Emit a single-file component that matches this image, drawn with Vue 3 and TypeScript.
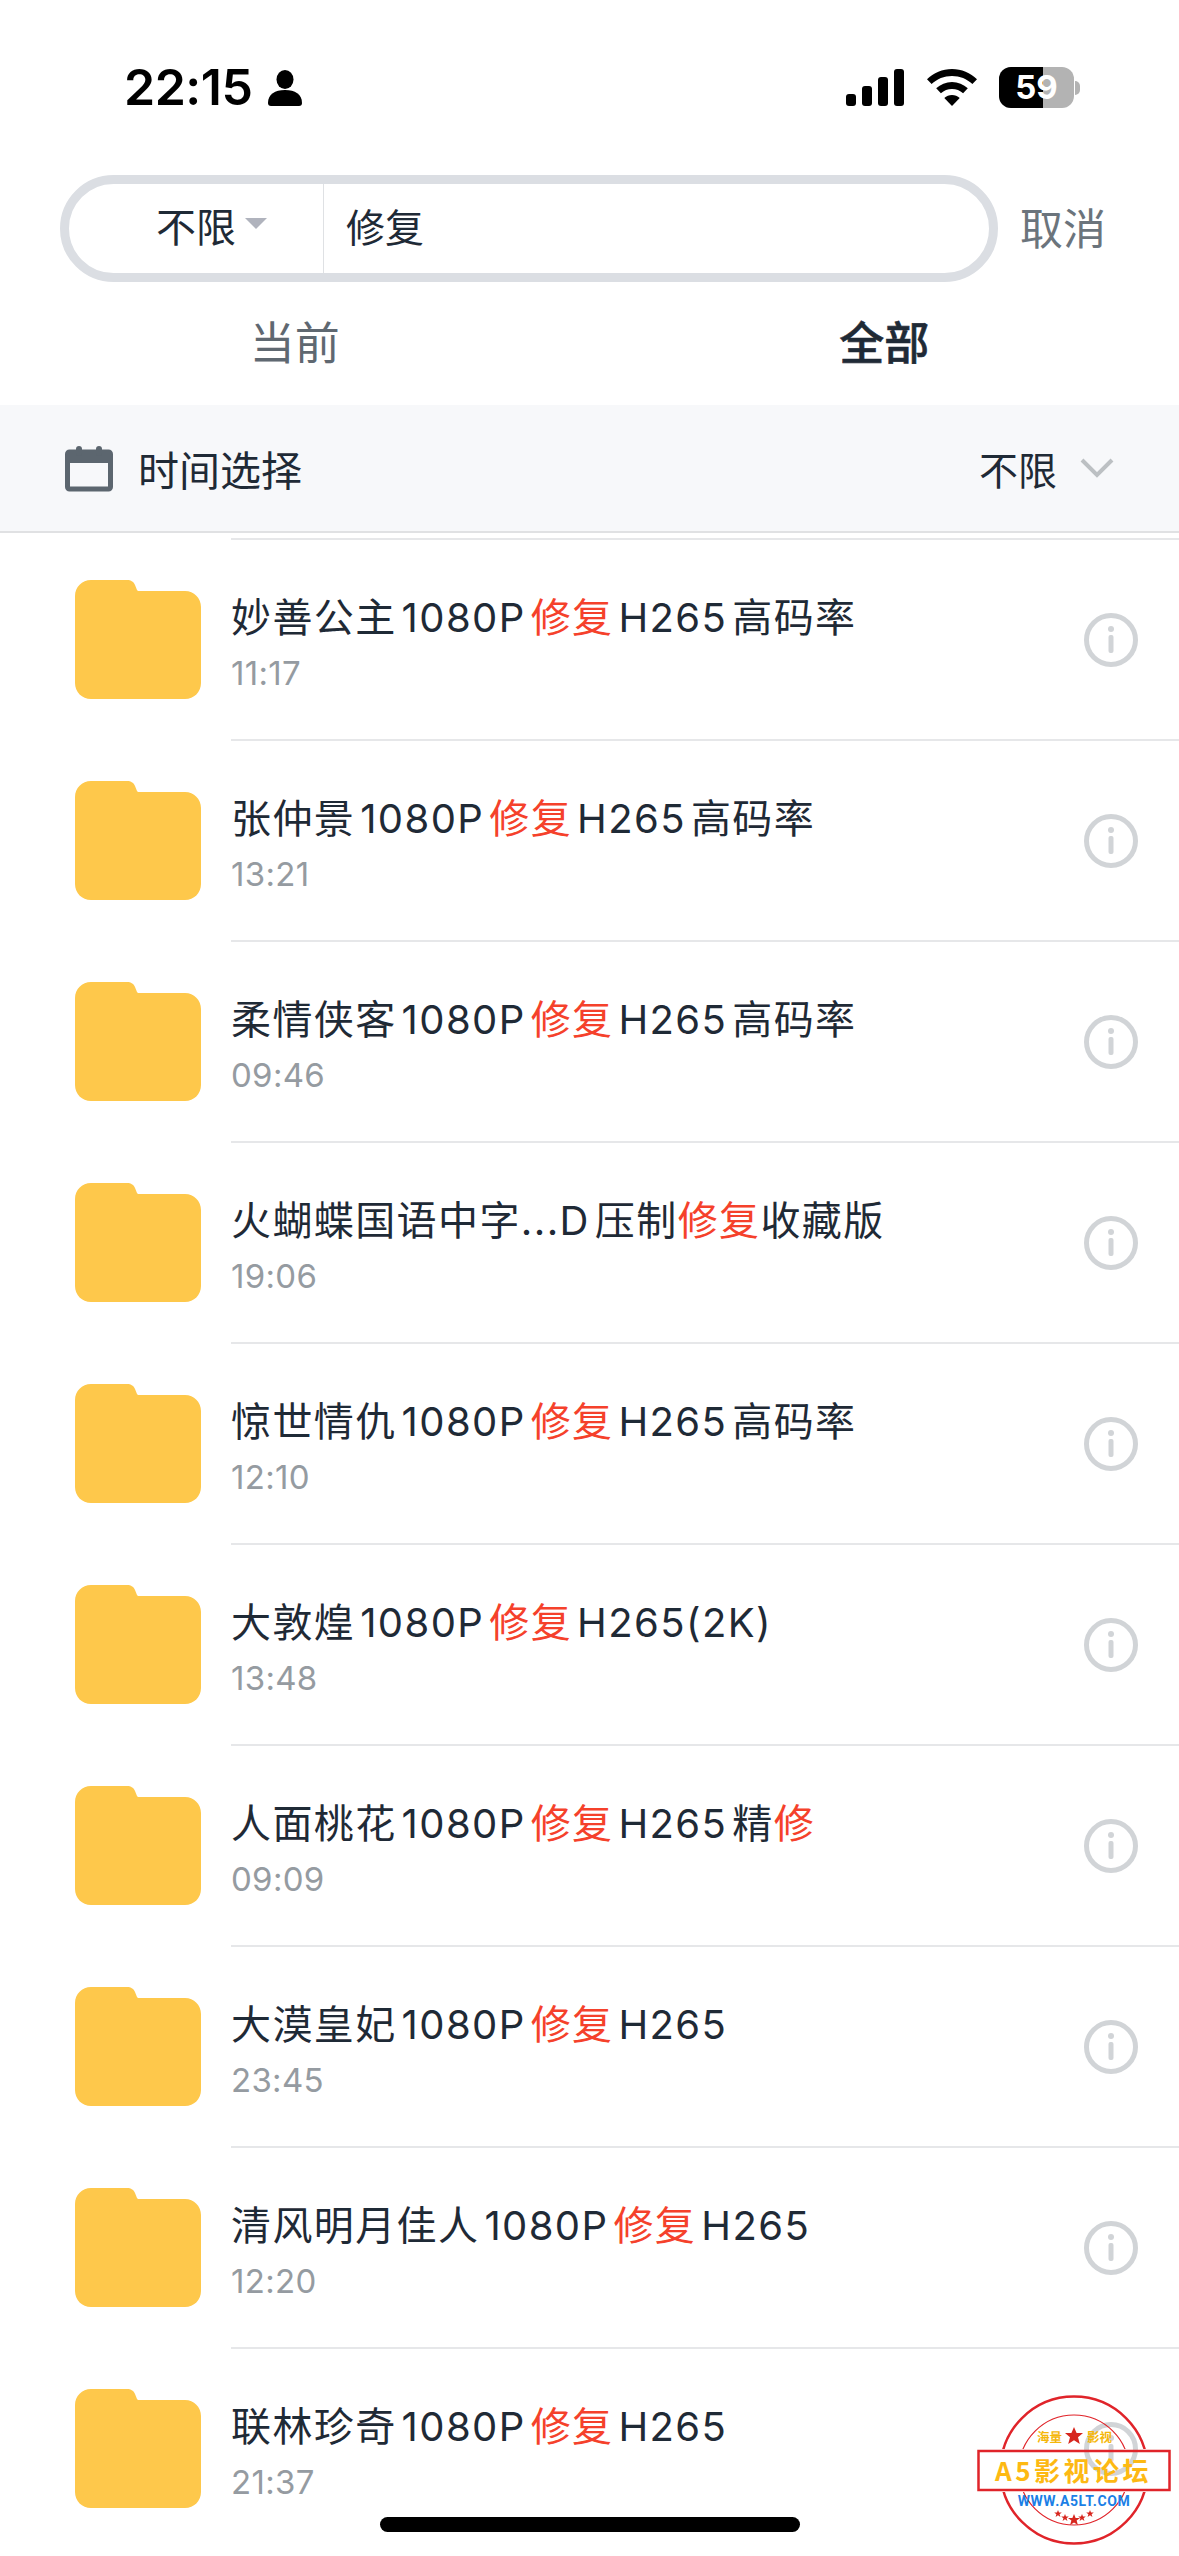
<script setup lang="ts">
interface Row {
  parts: { text: string; hit?: boolean }[]
  time: string
}
const r = (pre: string, post: string, time: string, extra?: string): Row => ({
  parts: [
    { text: pre },
    { text: '修复', hit: true },
    { text: post },
    ...(extra ? [{ text: extra, hit: true }] : []),
  ],
  time,
})
const rows: Row[] = [
  r('妙善公主1080P', 'H265高码率', '11:17'),
  r('张仲景1080P', 'H265高码率', '13:21'),
  r('柔情侠客1080P', 'H265高码率', '09:46'),
  r('火蝴蝶国语中字...D压制', '收藏版', '19:06'),
  r('惊世情仇1080P', 'H265高码率', '12:10'),
  r('大敦煌1080P', 'H265(2K)', '13:48'),
  r('人面桃花1080P', 'H265精', '09:09', '修'),
  r('大漠皇妃1080P', 'H265', '23:45'),
  r('清风明月佳人1080P', 'H265', '12:20'),
  r('联林珍奇1080P', 'H265', '21:37'),
]
</script>

<template>
  <div class="page">
    <header class="status">
      <div class="status-left">
        <span class="clock">22:15</span>
        <svg class="person" viewBox="0 0 34 36" width="34" height="36">
          <ellipse cx="17" cy="9.500" rx="8.500" ry="9.500" fill="#000" />
          <path d="M0 33c0-9 7-13 17-13s17 4 17 13c0 2-1 3-3 3H3c-2 0-3-1-3-3z" fill="#000" />
        </svg>
      </div>
      <div class="status-right">
        <svg viewBox="0 0 58 37" width="58" height="37">
          <rect x="0" y="25" width="10" height="12" rx="3" fill="#000" />
          <rect x="16" y="17" width="10" height="20" rx="3" fill="#000" />
          <rect x="32" y="8" width="10" height="29" rx="3" fill="#000" />
          <rect x="48" y="0" width="10" height="37" rx="3" fill="#000" />
        </svg>
        <svg class="wifi" viewBox="0 0 50 37" width="50" height="37">
          <path d="M25 0c9.500 0 18.500 3.800 25 10.200l-4.600 4.900C40 9.800 32.800 6.900 25 6.900S10 9.800 4.600 15.100L0 10.200C6.500 3.800 15.500 0 25 0z" fill="#000" />
          <path d="M25 13c6 0 11.500 2.300 15.800 6.300l-4.700 5C33 21.500 29.200 20 25 20s-8 1.500-11.100 4.300l-4.700-5C13.500 15.300 19 13 25 13z" fill="#000" />
          <path d="M25 26c2.900 0 5.600 1 7.700 2.900L25 37l-7.700-8.100c2.100-1.900 4.800-2.900 7.700-2.900z" fill="#000" />
        </svg>
        <div class="battery">
          <div class="battery-body">
            <div class="battery-fill"></div>
            <span class="battery-num">59</span>
          </div>
          <div class="battery-nub"></div>
        </div>
      </div>
    </header>

    <div class="search-row">
      <div class="search-box">
        <div class="scope">
          <span>不限</span>
          <i class="caret"></i>
        </div>
        <div class="query">修复</div>
      </div>
      <span class="cancel">取消</span>
    </div>

    <nav class="tabs">
      <span class="tab">当前</span>
      <span class="tab active">全部</span>
    </nav>

    <section class="filter">
      <div class="filter-left">
        <svg viewBox="0 0 48 48" width="48" height="48">
          <rect x="2.500" y="8" width="43" height="37" rx="2" fill="none" stroke="#5c666f" stroke-width="5" />
          <rect x="2" y="8" width="44" height="11" fill="#5c666f" />
          <rect x="11" y="2" width="6" height="10" rx="3" fill="#5c666f" />
          <rect x="31" y="2" width="6" height="10" rx="3" fill="#5c666f" />
        </svg>
        <span>时间选择</span>
      </div>
      <div class="filter-right">
        <span>不限</span>
        <svg viewBox="0 0 34 20" width="34" height="20">
          <path d="M2 2l15 15L32 2" fill="none" stroke="#bcc0c3" stroke-width="4" />
        </svg>
      </div>
    </section>

    <ul class="list">
      <li v-for="row in rows" :key="row.time" class="row">
        <svg class="folder" viewBox="0 0 126 119" width="126" height="119">
          <path
            d="M16 0h36c4 0 7 2 8 5l2 5c.5 .7 1 1 2 1h46c9 0 16 7 16 16v76c0 9-7 16-16 16H16c-9 0-16-7-16-16V16C0 7 7 0 16 0z"
            fill="#fec84b"
          />
        </svg>
        <div class="row-body">
          <div class="row-text">
            <div class="title">
              <span v-for="(p, i) in row.parts" :key="i" :class="{ hit: p.hit }">{{ p.text }}</span>
            </div>
            <div class="time">{{ row.time }}</div>
          </div>
          <svg class="info" viewBox="0 0 54 54" width="54" height="54">
            <circle cx="27" cy="27" r="24.500" fill="none" stroke="#d1d4d7" stroke-width="5" />
            <circle cx="27" cy="16" r="3" fill="#d1d4d7" />
            <rect x="24.500" y="22" width="5" height="18" rx="2" fill="#d1d4d7" />
          </svg>
        </div>
      </li>
    </ul>

    <div class="home-bar"></div>

    <svg class="stamp" viewBox="0 0 200 156" width="200" height="156">
      <defs>
        <clipPath id="stamp-clip">
          <rect x="0" y="0" width="200" height="57" />
          <rect x="0" y="100" width="200" height="56" />
        </clipPath>
      </defs>
      <g clip-path="url(#stamp-clip)">
        <circle cx="97" cy="78" r="73.500" fill="none" stroke="#e0242a" stroke-width="2.500" />
        <circle cx="97" cy="78" r="55" fill="none" stroke="#e0242a" stroke-width="1.200" />
      </g>
      <text x="60" y="50" class="st-small">海量</text>
      <text x="110" y="50" class="st-small">影视</text>
      <path d="M97 35l2.600 6h6.400l-5 4.300 1.800 6.700-5.800-3.700-5.800 3.700 1.800-6.700-5-4.300h6.400z" fill="#d7261e" />
      <rect x="1.500" y="59" width="191" height="39" fill="none" stroke="#e0242a" stroke-width="2.500" />
      <text x="18" y="89" class="st-main">A5影视论坛</text>
      <text x="97" y="114" class="st-url" text-anchor="middle">WWW.A5LT.COM</text>
      <path d="M97 122l1.600 4h4.400l-3.400 2.500 1.300 4.500-3.900-2.600-3.900 2.600 1.300-4.500-3.400-2.500h4.400z" fill="#d7261e" />
      <path d="M88 122l1 2.600h2.800l-2.200 1.600.8 2.800-2.400-1.700-2.400 1.700.8-2.800-2.200-1.600H87z" fill="#d7261e" />
      <path d="M105 122l1 2.600h2.800l-2.200 1.600.8 2.800-2.400-1.700-2.400 1.700.8-2.800-2.200-1.600h2.800z" fill="#d7261e" />
      <path d="M81 118l1 2.600h2.800l-2.200 1.600.8 2.800-2.400-1.700-2.400 1.700.8-2.800-2.200-1.600H80z" fill="#d7261e" />
      <path d="M113 118l1 2.600h2.800l-2.200 1.600.8 2.800-2.400-1.700-2.400 1.700.8-2.800-2.200-1.600h2.800z" fill="#d7261e" />
    </svg>
  </div>
</template>

<style>
html,
body {
  margin: 0;
  background: #fff;
}
</style>

<style scoped>
.page {
  position: relative;
  width: 1179px;
  height: 2556px;
  overflow: hidden;
  background: #fff;
  color: #1f2a36;
  font-family: Inter, "Noto Sans CJK SC", sans-serif;
  font-size: 40px;
}
.status {
  height: 175px;
  box-sizing: border-box;
  padding: 67px 99px 0 124px;
  display: flex;
  justify-content: space-between;
  align-items: flex-start;
  color: #000;
}
.status-left {
  display: flex;
  align-items: center;
  gap: 16px;
  height: 41px;
}
.clock {
  font-size: 50px;
  font-weight: 600;
  line-height: 41px;
  letter-spacing: -0.5px;
}
.status-right {
  display: flex;
  align-items: center;
  height: 41px;
}
.wifi {
  margin-left: 23px;
}
.battery {
  margin-left: 22px;
  display: flex;
  align-items: center;
}
.battery-body {
  position: relative;
  width: 75px;
  height: 41px;
  border-radius: 12px;
  background: #b3b3b3;
  overflow: hidden;
  display: flex;
  align-items: center;
  justify-content: center;
}
.battery-fill {
  position: absolute;
  inset: 0 auto 0 0;
  width: 44px;
  background: #000;
}
.battery-num {
  position: relative;
  color: #fff;
  font-size: 33px;
  font-weight: 700;
  line-height: 41px;
}
.battery-nub {
  width: 5px;
  height: 14px;
  margin-left: 1px;
  border-radius: 0 7px 7px 0;
  background: #b3b3b3;
}
.search-row {
  display: flex;
  align-items: center;
  padding-left: 60px;
  height: 107px;
}
.search-box {
  width: 938px;
  height: 107px;
  box-sizing: border-box;
  border: 9px solid #dbdee3;
  border-radius: 54px;
  display: flex;
  align-items: stretch;
}
.scope {
  width: 255px;
  flex: none;
  box-sizing: border-box;
  padding: 0 0 8px 87px;
  display: flex;
  align-items: center;
  gap: 9px;
  border-right: 1px solid #dfe1e4;
}
.caret {
  width: 0;
  height: 0;
  border-left: 11px solid transparent;
  border-right: 11px solid transparent;
  border-top: 11px solid #b0b3bd;
  margin-top: -2px;
}
.query {
  padding: 0 0 8px 22px;
  font-size: 39px;
  display: flex;
  align-items: center;
}
.cancel {
  margin-left: 22px;
  padding-bottom: 5px;
  font-size: 43px;
  color: #6b747c;
}
.tabs {
  height: 123px;
  box-sizing: border-box;
  padding-bottom: 6px;
  display: grid;
  grid-template-columns: 1fr 1fr;
  align-items: center;
  justify-items: center;
  font-size: 45px;
  color: #5f6871;
}
.tab.active {
  color: #1f2a36;
  font-weight: 500;
  -webkit-text-stroke: 0.6px #1f2a36;
}
.filter {
  height: 128px;
  box-sizing: border-box;
  background: #f7f8fa;
  border-bottom: 2px solid #e0e1e3;
  padding: 0 65px;
  display: flex;
  align-items: center;
  justify-content: space-between;
  font-size: 41px;
}
.filter-left {
  display: flex;
  align-items: center;
  gap: 25px;
}
.filter-right {
  display: flex;
  align-items: center;
  gap: 23px;
  font-size: 39px;
}
.list {
  list-style: none;
  margin: 5px 0 0;
  padding: 0;
}
.row {
  height: 201px;
  display: flex;
  padding-left: 75px;
}
.folder {
  flex: none;
  margin-top: 42px;
}
.row-body {
  flex: 1;
  margin-left: 30px;
  border-top: 2px solid #e6e7e9;
  display: flex;
  align-items: center;
  justify-content: space-between;
  padding-right: 41px;
}
.row-text {
  display: flex;
  flex-direction: column;
  gap: 12px;
  padding-top: 7px;
}
.title {
  font-size: 40px;
  letter-spacing: 1.4px;
  line-height: 48px;
  white-space: nowrap;
  text-autospace: normal;
}
.hit {
  color: #f5412b;
}
.time {
  font-size: 33px;
  line-height: 38px;
  letter-spacing: 0.3px;
  color: #959ba1;
}
.home-bar {
  position: absolute;
  left: 380px;
  top: 2517px;
  width: 420px;
  height: 15px;
  border-radius: 8px;
  background: #000;
}
.stamp {
  position: absolute;
  left: 977px;
  top: 2392px;
}
.st-small {
  font: 700 12.500px "Noto Sans CJK SC", sans-serif;
  fill: #f5b70a;
}
.st-main {
  font: 700 26px "Noto Sans CJK SC", sans-serif;
  letter-spacing: 3.500px;
  fill: #fdb913;
}
.st-url {
  font: 700 14px Roboto, sans-serif;
  letter-spacing: 0.6px;
  fill: #1c7fe6;
}
</style>
